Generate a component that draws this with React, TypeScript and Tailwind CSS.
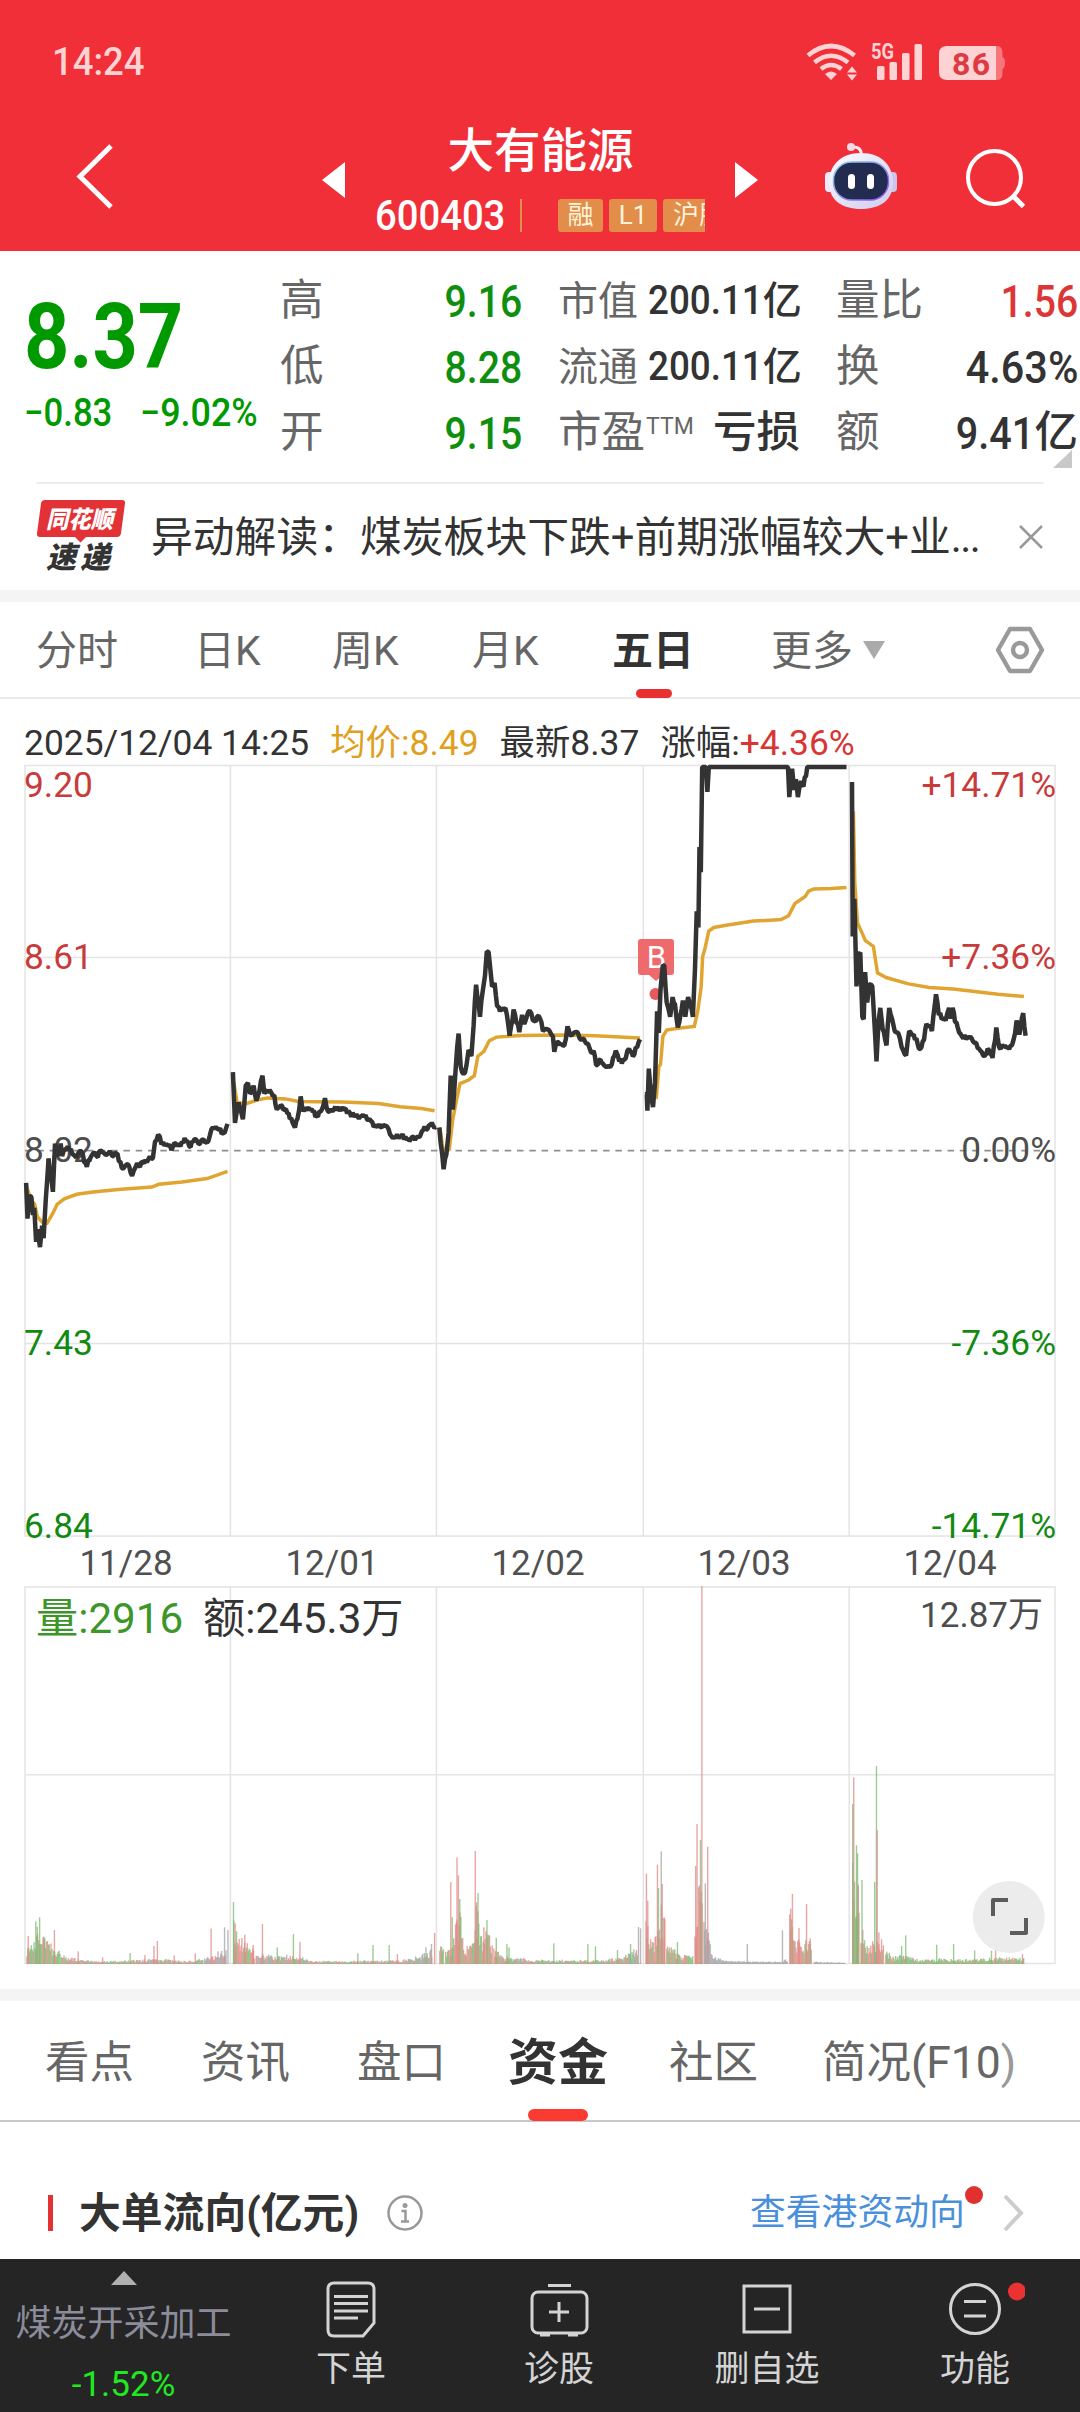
import { type ReactNode } from "react";
import clsx from "clsx";

type Point = [number, number];
type Series = { left: number; scale: number; price: Point[]; avg: Point[] };
type Tone = "r" | "g" | "n";

const TONES: Record<Tone, string> = {
  r: "#e08a86",
  g: "#7dba74",
  n: "#a3a3a6",
};

const GRID_X = [25, 230.4, 436.4, 643.3, 849.2, 1055];

// price and average traces, one entry per trading session
const SERIES: Series[] = [
  {
    left: 0,
    scale: 2.8,
    price: [[73, 1240], [77, 1340], [82, 1275], [88, 1280], [92, 1330], [96, 1310], [101, 1405], [105, 1370], [112, 1420], [118, 1360], [122, 1395], [128, 1290], [136, 1172], [148, 1265], [154, 1130], [160, 1165], [170, 1130], [174, 1165], [185, 1145], [195, 1150], [210, 1165], [225, 1150], [243, 1195], [260, 1158], [270, 1165], [285, 1152], [300, 1160], [325, 1158], [345, 1200], [355, 1188], [362, 1195], [370, 1220], [380, 1195], [400, 1182], [415, 1175], [428, 1170], [434, 1125], [443, 1105], [452, 1132], [465, 1130], [480, 1148], [492, 1130], [505, 1138], [517, 1115], [530, 1138], [548, 1118], [560, 1130], [570, 1118], [583, 1125], [592, 1090], [608, 1088], [625, 1100], [637, 1075]],
    avg: [[73, 1245], [85, 1285], [97, 1300], [105, 1335], [120, 1352], [132, 1353], [148, 1325], [160, 1300], [180, 1285], [215, 1272], [260, 1266], [340, 1258], [425, 1252], [445, 1244], [510, 1238], [580, 1228], [637, 1208]],
  },
  {
    left: 0,
    scale: 2.8,
    price: [[652, 930], [658, 1072], [668, 1015], [672, 1030], [680, 1062], [688, 968], [694, 960], [700, 990], [710, 968], [718, 1010], [726, 985], [735, 940], [740, 990], [755, 980], [768, 995], [775, 1035], [790, 1025], [808, 1045], [826, 1085], [833, 1060], [842, 998], [850, 1040], [865, 1030], [890, 1055], [905, 1025], [910, 1003], [918, 1040], [935, 1035], [960, 1035], [980, 1045], [1005, 1060], [1020, 1055], [1050, 1080], [1080, 1080], [1100, 1115], [1120, 1108], [1150, 1118], [1170, 1110], [1185, 1092], [1205, 1078], [1220, 1083]],
    avg: [[655, 960], [664, 1015], [690, 1018], [720, 1008], [750, 1002], [800, 1005], [835, 1012], [890, 1013], [960, 1014], [1060, 1018], [1120, 1027], [1180, 1032], [1217, 1038]],
  },
  {
    left: 0,
    scale: 2.8,
    price: [[1230, 1085], [1242, 1202], [1250, 1160], [1256, 1100], [1262, 940], [1268, 1035], [1276, 920], [1284, 822], [1290, 915], [1298, 935], [1306, 912], [1312, 868], [1320, 885], [1326, 800], [1333, 685], [1344, 775], [1352, 700], [1358, 660], [1363, 592], [1368, 594], [1378, 690], [1385, 680], [1392, 745], [1400, 760], [1415, 750], [1427, 828], [1438, 755], [1454, 818], [1462, 770], [1468, 795], [1483, 758], [1492, 785], [1512, 780], [1520, 815], [1535, 810], [1548, 830], [1552, 873], [1560, 845], [1580, 855], [1589, 802], [1600, 828], [1618, 820], [1628, 840], [1642, 850], [1655, 875], [1662, 870], [1669, 910], [1681, 895], [1700, 915], [1713, 908], [1724, 870], [1734, 900], [1748, 895], [1761, 865], [1772, 885], [1792, 838]],
    avg: [[1232, 1085], [1240, 1145], [1258, 1145], [1268, 1060], [1278, 1010], [1288, 962], [1312, 952], [1328, 940], [1338, 885], [1355, 872], [1370, 842], [1390, 832], [1460, 827], [1568, 826], [1666, 828], [1792, 834]],
  },
  {
    left: 540,
    scale: 2.9037,
    price: [[305, 992], [310, 992], [312, 1038], [316, 920], [322, 990], [328, 1028], [334, 960], [340, 760], [345, 820], [350, 700], [357, 630], [361, 632], [368, 735], [378, 775], [385, 720], [392, 740], [400, 805], [408, 770], [415, 730], [422, 775], [430, 720], [436, 745], [444, 775], [450, 640], [455, 480], [460, 525], [463, 300], [467, 370], [471, 76], [482, 76], [486, 145], [490, 76], [720, 76], [724, 160], [732, 80], [738, 140], [743, 110], [749, 160], [758, 115], [765, 130], [776, 76], [890, 76]],
    avg: [[305, 992], [312, 990], [338, 1000], [345, 915], [350, 908], [357, 830], [368, 812], [400, 807], [448, 802], [458, 760], [468, 690], [472, 608], [480, 580], [490, 535], [505, 525], [545, 518], [620, 507], [700, 503], [722, 492], [740, 458], [770, 438], [780, 423], [795, 417], [845, 416], [890, 413]],
  },
  {
    left: 540,
    scale: 2.9037,
    price: [[906, 118], [908, 550], [913, 445], [919, 690], [925, 600], [930, 595], [936, 775], [940, 782], [944, 650], [950, 735], [956, 685], [965, 690], [977, 900], [983, 790], [988, 750], [995, 810], [1006, 855], [1014, 750], [1022, 780], [1030, 815], [1040, 820], [1050, 860], [1063, 883], [1072, 815], [1085, 825], [1104, 865], [1115, 840], [1122, 795], [1138, 815], [1150, 712], [1158, 770], [1178, 785], [1188, 750], [1193, 780], [1198, 750], [1205, 790], [1225, 830], [1245, 835], [1258, 845], [1275, 865], [1290, 885], [1300, 865], [1314, 890], [1325, 805], [1333, 860], [1350, 855], [1362, 865], [1375, 840], [1384, 785], [1392, 825], [1403, 765], [1410, 828]],
    avg: [[910, 200], [914, 400], [922, 512], [935, 540], [945, 562], [968, 578], [980, 652], [1005, 665], [1070, 683], [1130, 693], [1200, 697], [1330, 712], [1405, 718]],
  },
];

// [x, height] outline of the ordinary per-minute volume
const VOLUME_BASE: { left: number; tones: string; outline: Point[] }[] = [
  { left: 0, tones: "ggr", outline: [[76, 40], [90, 50], [100, 80], [125, 70], [150, 50], [175, 30]] },
  { left: 0, tones: "rgn", outline: [[176, 28], [200, 18], [230, 12], [270, 8], [300, 8], [380, 10], [450, 14], [540, 8], [590, 15]] },
  { left: 0, tones: "nnr", outline: [[592, 15], [625, 30], [657, 40]] },
  { left: 0, tones: "rrg", outline: [[677, 110], [690, 80], [715, 60], [740, 30]] },
  { left: 0, tones: "rgn", outline: [[742, 30], [800, 22], [860, 25], [900, 8], [1000, 8], [1100, 10], [1180, 12], [1230, 30], [1255, 40]] },
  { left: 0, tones: "ggr", outline: [[1275, 50], [1290, 50]] },
  { left: 0, tones: "rrg", outline: [[1292, 35], [1308, 40], [1315, 90], [1325, 130], [1335, 130], [1345, 45], [1365, 50], [1372, 70], [1380, 180], [1390, 100], [1400, 70], [1415, 90], [1430, 40]] },
  { left: 0, tones: "rgn", outline: [[1432, 40], [1460, 20], [1568, 10]] },
  { left: 540, tones: "rgn", outline: [[0, 12], [170, 10], [240, 18], [285, 50]] },
  { left: 540, tones: "rrg", outline: [[306, 110], [318, 80], [330, 70], [340, 130], [350, 160], [360, 120], [364, 70]] },
  { left: 540, tones: "ggr", outline: [[366, 60], [400, 25], [444, 20]] },
  { left: 540, tones: "rrr", outline: [[448, 150], [460, 220], [472, 180]] },
  { left: 540, tones: "nnn", outline: [[474, 120], [490, 70], [500, 20], [540, 8], [700, 6], [720, 18]] },
  { left: 540, tones: "rrg", outline: [[723, 130], [735, 90], [760, 40], [775, 80], [790, 40]] },
  { left: 540, tones: "nnn", outline: [[794, 6], [886, 4]] },
  { left: 540, tones: "ggg", outline: [[906, 260], [920, 230], [928, 120]] },
  { left: 540, tones: "grr", outline: [[930, 110], [950, 60], [975, 70], [985, 80], [1000, 40]] },
  { left: 540, tones: "grg", outline: [[1002, 40], [1020, 20], [1060, 25], [1100, 12], [1150, 15], [1250, 12], [1330, 18], [1406, 15]] },
];

const VOLUME_SPIKES: { left: number; bars: [number, number, Tone][] }[] = [
  {
    left: 0,
    bars: [[82, 84, "r"], [104, 128, "g"], [108, 112, "g"], [115, 140, "g"], [128, 72, "r"], [158, 102, "r"], [227, 38, "r"], [298, 20, "r"], [378, 33, "g"], [421, 27, "r"], [447, 54, "r"], [457, 69, "r"], [506, 26, "r"], [567, 32, "r"], [613, 106, "r"], [652, 110, "n"], [662, 102, "n"], [678, 186, "g"], [683, 122, "r"], [711, 88, "r"], [735, 57, "r"], [762, 120, "r"], [805, 50, "g"], [852, 90, "g"], [871, 66, "r"], [1039, 32, "g"], [1083, 57, "g"], [1130, 57, "g"], [1154, 30, "r"], [1237, 50, "n"], [1253, 60, "n"], [1262, 93, "r"], [1309, 246, "r"], [1313, 140, "g"], [1327, 320, "r"], [1331, 266, "r"], [1335, 195, "g"], [1380, 339, "r"], [1384, 185, "r"], [1388, 213, "g"], [1405, 110, "r"], [1414, 132, "g"], [1441, 78, "g"], [1472, 60, "g"], [1478, 50, "g"]],
  },
  {
    left: 540,
    bars: [[40, 62, "g"], [139, 60, "g"], [161, 53, "g"], [225, 42, "g"], [263, 60, "g"], [286, 111, "n"], [292, 107, "n"], [309, 271, "r"], [313, 190, "r"], [341, 298, "r"], [344, 228, "g"], [352, 338, "n"], [355, 240, "r"], [361, 140, "r"], [399, 66, "g"], [452, 294, "r"], [456, 420, "r"], [466, 372, "g"], [470, 1134, "r"], [480, 242, "n"], [487, 352, "r"], [602, 60, "n"], [704, 101, "n"], [728, 166, "r"], [733, 210, "r"], [752, 108, "r"], [774, 180, "r"], [785, 77, "r"], [908, 480, "g"], [911, 560, "r"], [919, 356, "g"], [922, 332, "g"], [924, 238, "r"], [935, 252, "g"], [972, 246, "g"], [977, 594, "g"], [979, 402, "r"], [984, 95, "r"], [1050, 54, "g"], [1062, 86, "g"], [1152, 58, "g"], [1201, 60, "g"], [1262, 41, "g"], [1311, 40, "g"], [1323, 50, "r"], [1401, 30, "r"]],
  },
];

const noise = (n: number) => {
  const v = Math.sin(n * 12.9898) * 43758.5453;
  return v - Math.floor(v);
};

const toPath = (points: Point[], left: number, scale: number) =>
  points
    .map(([x, y], i) => `${i ? "L" : "M"}${(left + x / scale).toFixed(1)} ${(740 + y / 2.8).toFixed(1)}`)
    .join("");

// minute ticks between the main turning points
const withTicks = (points: Point[]) => {
  const out: Point[] = [];
  points.forEach(([x, y], i) => {
    out.push([x, y]);
    const next = points[i + 1];
    if (!next || (y < 80 && next[1] < 80)) return;
    const steps = Math.floor((next[0] - x) / 3.5);
    for (let s = 1; s < steps; s++) {
      const t = s / steps;
      out.push([x + (next[0] - x) * t, y + (next[1] - y) * t + (noise(x + s * 3.1) - 0.5) * 17]);
    }
  });
  return out;
};

const heightAt = (outline: Point[], x: number) => {
  const i = Math.max(1, outline.findIndex(([px]) => px >= x));
  const [x0, h0] = outline[i - 1];
  const [x1, h1] = outline[i];
  return h0 + ((h1 - h0) * (x - x0)) / (x1 - x0);
};

const Bar = ({ x, h, tone }: { x: number; h: number; tone: Tone }) => (
  <rect x={x} y={1964 - h} width={1.4} height={h} fill={TONES[tone]} opacity={0.75} />
);

// narrow figures used across the quote panel
const Num = ({ children, className }: { children: ReactNode; className?: string }) => (
  <span className={clsx("inline-block whitespace-nowrap", className)}>{children}</span>
);

const StatusBar = () => (
  <div className="flex h-[122px] items-center justify-between pl-[52px] pr-[74px] text-[#ffd2d4]">
    <Num className="mt-[2px] origin-left scale-x-[0.96] text-[38px] font-medium">14:24</Num>
    <svg width="200" height="44" viewBox="806 39 200 44" fill="#ffd2d4">
      <g fill="none" stroke="#ffd2d4" strokeWidth="4.6">
        <path d="M808 55.5Q831 36.5 854.5 55.5" />
        <path d="M814.5 62.5Q831 49 848 62.5" />
        <path d="M821 69Q831 61 841.5 69" />
      </g>
      <path d="M825 74Q831 69 837 74L831 80Z" />
      <path d="M847 72.5L852 66.500L857 72.500ZM847 74.500H857L852 80.500Z" />
      <text x="871" y="59" fontSize="22.5" fontWeight="700" textLength="23" lengthAdjust="spacingAndGlyphs">5G</text>
      <rect x="877" y="66" width="7.5" height="14" rx="1.5" />
      <rect x="889.5" y="62" width="7.5" height="18" rx="1.5" />
      <rect x="902" y="53" width="7.5" height="27" rx="1.5" />
      <rect x="914.5" y="44" width="7.5" height="36" rx="1.5" />
      <path d="M996 46H997Q1002 46 1002.5 52V57Q1005 58 1005 63Q1005 68 1002.5 69V74Q1002 80 997 80H996Z" fill="#f7767b" />
      <path d="M947 46H996V80H947Q939 80 939 72V54Q939 46 947 46Z" />
      <text x="952" y="74.5" fontSize="32" fontWeight="700" fill="#dd3a42" textLength="38">86</text>
    </svg>
  </div>
);

const Robot = () => (
  <svg width="76" height="72" viewBox="822 140 76 72">
    <defs>
      <linearGradient id="shell" x1="0" y1="0" x2="1" y2="1">
        <stop offset="0" stopColor="#fff" />
        <stop offset="1" stopColor="#cfc9ee" />
      </linearGradient>
      <linearGradient id="visor" x1="0" y1="0" x2="1" y2="1">
        <stop offset="0" stopColor="#8fd8ee" />
        <stop offset="1" stopColor="#8a4df0" />
      </linearGradient>
    </defs>
    <path d="M852 147Q861 146 861.5 155" fill="none" stroke="#f6e6f2" strokeWidth="3" />
    <circle cx="851" cy="147" r="4" fill="#f6dbe6" />
    <rect x="825" y="172" width="9" height="20" rx="4" fill="#ece9fa" />
    <rect x="888" y="172" width="9" height="20" rx="4" fill="#cbc5ea" />
    <path d="M861 153C882 153 893 166 893 183C893 200 880 209 861 209C842 209 829 200 829 183C829 166 840 153 861 153Z" fill="url(#shell)" />
    <rect x="833.5" y="162" width="55" height="38" rx="18" fill="#222c50" stroke="url(#visor)" strokeWidth="1.5" />
    <rect x="848" y="174" width="7" height="15" rx="3.5" fill="#fff" />
    <rect x="867" y="174" width="7" height="15" rx="3.5" fill="#fff" />
  </svg>
);

const Header = () => (
  <header className="h-[251px] bg-[#f12f38] text-white">
    <StatusBar />
    <div className="flex h-[129px] items-start">
      <svg className="ml-[72px] mt-[18px] shrink-0" width="44" height="72" viewBox="72 140 44 72" fill="none">
        <path d="M111 146L80 176.5L111 207" stroke="#fff" strokeWidth="5" />
      </svg>
      <svg className="ml-[206px] mt-[40px] shrink-0" width="23" height="36" viewBox="0 0 23 36">
        <path d="M23 0V36L0 18Z" fill="#fff" />
      </svg>
      <div className="ml-[30px] w-[331px] shrink-0">
        <div className="flex h-[68px] items-center justify-center pb-[9px] text-[46.5px] font-medium leading-none">
          大有能源
        </div>
        <div className="flex h-[50px] items-center overflow-hidden">
          <div className="w-[145px] shrink-0 pt-[2px]">
            <Num className="origin-left scale-x-[0.91] text-[42px] font-medium leading-none">600403</Num>
          </div>
          <div className="h-[33px] w-[2px] shrink-0 bg-[#e28d49]" />
          <div className="ml-[36px] flex h-[33px] w-[147px] shrink-0 gap-[6px] overflow-hidden text-[26px] leading-[33px] text-[#fff3dc]">
            <span className="w-[45px] shrink-0 rounded-[3px] bg-[#e28d49] text-center">融</span>
            <span className="w-[48px] shrink-0 rounded-[3px] bg-[#e28d49] text-center">L1</span>
            <span className="w-[76px] shrink-0 rounded-[3px] bg-[#e28d49] pl-[10px]">沪股</span>
          </div>
        </div>
      </div>
      <svg className="ml-[29px] mt-[40px] shrink-0" width="23" height="36" viewBox="0 0 23 36">
        <path d="M0 0V36L23 18Z" fill="#fff" />
      </svg>
      <div className="ml-[64px] mt-[18px] shrink-0">
        <Robot />
      </div>
      <svg className="ml-[62px] mt-[18px] shrink-0" width="70" height="76" viewBox="960 140 70 76" fill="none" stroke="#fff">
        <circle cx="994.5" cy="177.5" r="26.5" strokeWidth="4" />
        <path d="M1013 196L1023.5 206.5" strokeWidth="5" />
      </svg>
    </div>
  </header>
);

const Row = ({ label, children }: { label: ReactNode; children: ReactNode }) => (
  <div className="flex h-[66px] items-center justify-between whitespace-nowrap">
    <span className="text-[#666]">{label}</span>
    {children}
  </div>
);

const Quote = () => (
  <section className="relative flex h-[231px] pt-[17px] text-[43.5px] text-[#333]">
    <div className="w-[280px] shrink-0 pl-[24px] pt-[24px] leading-none text-[#009900]">
      <Num className="origin-left scale-x-[0.87] text-[91px] font-bold leading-none">8.37</Num>
      <div className="mt-[11px] flex h-[39px] text-[39px] font-medium">
        <div className="w-[116px]">
          <Num className="origin-left scale-x-[0.89]">−0.83</Num>
        </div>
        <Num className="origin-left scale-x-[0.92]">−9.02%</Num>
      </div>
    </div>
    <div className="w-[242px] shrink-0">
      {[["高", "9.16"], ["低", "8.28"], ["开", "9.15"]].map(([label, value]) => (
        <Row key={label} label={label}>
          <Num className="origin-right scale-x-[0.87] text-[45px] font-medium text-[#0f8f0f]">{value}</Num>
        </Row>
      ))}
    </div>
    <div className="ml-[36px] w-[242px] shrink-0">
      {["市值", "流通"].map((label) => (
        <Row key={label} label={<span className="text-[40px]">{label}</span>}>
          <span className="flex items-center">
            <Num className="origin-right scale-x-[0.92] text-[40px] font-medium">200.11</Num>
            <span className="text-[39px] font-medium">亿</span>
          </span>
        </Row>
      ))}
      <Row label={<>市盈<sup className="-top-[13px] ml-[1px] text-[23px] leading-none">TTM</sup></>}>
        <span className="font-medium">亏损</span>
      </Row>
    </div>
    <div className="ml-[36px] w-[242px] shrink-0">
      <Row label="量比">
        <Num className="origin-right scale-x-[0.87] text-[45px] font-medium text-[#dc3636]">1.56</Num>
      </Row>
      <Row label="换">
        <Num className="origin-right scale-x-[0.92] text-[45px] font-medium">4.63%</Num>
      </Row>
      <Row label="额">
        <span className="flex items-center">
          <Num className="origin-right scale-x-[0.88] text-[45px] font-medium">9.41</Num>
          <span className="font-medium">亿</span>
        </span>
      </Row>
    </div>
    <svg className="absolute bottom-[14px] right-2" width="19" height="18" viewBox="0 0 19 18">
      <path d="M19 0V18H0Z" fill="#c8c8c8" />
    </svg>
  </section>
);

const News = () => (
  <section className="mx-9 flex h-[108px] items-center border-t-2 border-[#ededed]">
    <svg className="shrink-0" width="92" height="76" viewBox="36 499 92 76">
      <path d="M45 500H122Q125.5 500 125 503.5L121 533Q120.5 537 117 537H86L80.5 542.5L75 537H40Q36.5 537 37 533.5L41 503.5Q41.5 500 45 500Z" fill="#e33236" />
      <g fontStyle="italic" fontWeight="900">
        <text x="46" y="527.5" fontSize="24" fill="#fff" textLength="67" lengthAdjust="spacingAndGlyphs">同花顺</text>
        <text x="46" y="568" fontSize="30" fill="#333" textLength="64">速递</text>
      </g>
    </svg>
    <p className="ml-[23px] mt-[2px] w-[846px] shrink-0 whitespace-nowrap text-[41.8px] leading-none text-[#333]">
      异动解读：煤炭板块下跌+前期涨幅较大+业<span className="tracking-[-1.5px]">...</span>
    </p>
    <svg className="ml-[21px] shrink-0" width="26" height="26" viewBox="0 0 26 26" stroke="#999" strokeWidth="2.5">
      <path d="M2 2L24 24M24 2L2 24" />
    </svg>
  </section>
);

const PeriodTabs = () => (
  <nav className="relative flex h-[97px] items-center border-b-2 border-[#ebebeb] text-[41px] text-[#666]">
    <span className="ml-[36px] mt-[3px] w-[158px]">分时</span>
    <span className="mt-[3px] w-[138px]">日K</span>
    <span className="mt-[3px] w-[140px]">周K</span>
    <span className="mt-[3px] w-[140px]">月K</span>
    <span className="mt-[3px] w-[159px] font-bold text-[#333]">五日</span>
    <span className="mt-[3px]">更多</span>
    <svg className="ml-[10px]" width="22" height="18" viewBox="0 0 22 18">
      <path d="M0 0H22L11 18Z" fill="#aaa" />
    </svg>
    <svg className="ml-[110px]" width="50" height="48" viewBox="0 0 50 48" fill="none" stroke="#999" strokeWidth="4.4">
      <path d="M15 3H35L47 24L35 45H15L3 24Z" strokeLinejoin="round" />
      <circle cx="25" cy="24" r="7" />
    </svg>
    <div className="absolute -bottom-[1px] left-[636px] h-[9px] w-[36px] rounded-full bg-[#e93030]" />
  </nav>
);

const AXIS = [
  { y: 797, price: "9.20", pct: "+14.71%", fill: "#c93a3a" },
  { y: 968.5, price: "8.61", pct: "+7.36%", fill: "#c93a3a" },
  { y: 1161.5, price: "8.02", pct: "0.00%", fill: "#4d4d4d" },
  { y: 1354.5, price: "7.43", pct: "-7.36%", fill: "#128a12" },
  { y: 1537.5, price: "6.84", pct: "-14.71%", fill: "#128a12" },
];

const PriceChart = () => (
  <svg className="block" width="1080" height="782" viewBox="0 760 1080 782">
    <g stroke="#e4e4e4" strokeWidth="1.5" fill="none">
      <rect x="25" y="765.5" width="1030" height="770.5" />
      <path d="M25 957.5H1055M25 1343.5H1055" />
      {GRID_X.slice(1, 5).map((x) => (
        <path key={x} d={`M${x} 765V1536`} />
      ))}
    </g>
    <path d="M25 1150.7H1055" stroke="#8f8f8f" strokeWidth="1.8" strokeDasharray="6.5 5.8" />
    <g fontSize="35.3">
      {AXIS.map((a) => (
        <g key={a.y} fill={a.fill}>
          <text x="24" y={a.y}>{a.price}</text>
          <text x="1056" y={a.y} textAnchor="end">{a.pct}</text>
        </g>
      ))}
    </g>
    <g fill="none" strokeWidth="3.5" stroke="#e0a530">
      {SERIES.map((s, i) => (
        <path key={i} d={toPath(s.avg, s.left, s.scale)} />
      ))}
    </g>
    <circle cx="655.5" cy="994" r="6" fill="#e65a5e" />
    <path d="M641 939H671Q674 939 674 942V972Q674 975 671 975H663L656 981L649 975H641Q638 975 638 972V942Q638 939 641 939Z" fill="#ee6a6d" />
    <text x="656.5" y="967.5" fontSize="31" fill="#fff" textAnchor="middle">B</text>
    <g fill="none" strokeWidth="4.5" stroke="#333" strokeLinejoin="bevel">
      {SERIES.map((s, i) => (
        <path key={i} d={toPath(withTicks(s.price), s.left, s.scale)} />
      ))}
    </g>
  </svg>
);

const VolumeChart = () => (
  <svg className="block" width="1080" height="384" viewBox="0 1584 1080 384">
    <g stroke="#e4e4e4" strokeWidth="1.5" fill="none">
      <rect x="25" y="1587" width="1030" height="376.5" />
      <path d="M25 1774.7H1055" />
      {GRID_X.slice(1, 5).map((x) => (
        <path key={x} d={`M${x} 1587V1964`} />
      ))}
    </g>
    {VOLUME_BASE.map((seg, i) => {
      const first = seg.outline[0][0];
      const last = seg.outline[seg.outline.length - 1][0];
      const count = Math.floor((last - first) / 2.6);
      return Array.from({ length: count }, (_, k) => {
        const x = first + k * 2.6;
        const h = heightAt(seg.outline, x) * (0.45 + noise(x + i) * 0.75);
        const tone = seg.tones[Math.floor(noise(x * 1.7 + 3) * 3)] as Tone;
        return <Bar key={`${i}-${k}`} x={seg.left + x / 2.9037} h={h / 3} tone={tone} />;
      });
    })}
    {VOLUME_SPIKES.map((seg) =>
      seg.bars.map(([x, h, tone]) => <Bar key={`${seg.left}-${x}`} x={seg.left + x / 2.9037 - 0.7} h={h / 3} tone={tone} />)
    )}
    <text x="36" y="1632.5" fontSize="42.2" fill="#3c9629">量:2916</text>
    <text x="203" y="1632.5" fontSize="42.2" fill="#333">额:245.3万</text>
    <text x="1043" y="1627" fontSize="35" fill="#4d4d4d" textAnchor="end">12.87万</text>
    <circle cx="1008.7" cy="1917" r="36" fill="#ececec" />
    <path d="M993 1916V1900H1008M1026 1918V1933H1010" fill="none" stroke="#5c5c5c" strokeWidth="4" strokeLinejoin="round" />
  </svg>
);

const ChartPanel = () => (
  <section>
    <div className="flex h-[61px] items-center gap-[21px] whitespace-nowrap pl-[24px] pt-[29px] text-[35.4px] leading-none text-[#333]">
      <span>2025/12/04 14:25</span>
      <span className="text-[#dfa01e]">均价:8.49</span>
      <span>最新8.37</span>
      <span>
        涨幅:<span className="text-[#d93535]">+4.36%</span>
      </span>
    </div>
    <PriceChart />
    <div className="ml-[23px] mr-[27px] grid h-[42px] grid-cols-5 items-center text-center text-[35px] leading-none text-[#505050]">
      {["11/28", "12/01", "12/02", "12/03", "12/04"].map((d) => (
        <span key={d}>{d}</span>
      ))}
    </div>
    <VolumeChart />
  </section>
);

const DetailTabs = () => (
  <nav className="relative flex h-[121px] items-center whitespace-nowrap border-b-2 border-[#c8c8c8] pt-[5px] text-[44.5px] text-[#666]">
    <span className="ml-[45px] w-[156px] shrink-0">看点</span>
    <span className="w-[156px] shrink-0">资讯</span>
    <span className="w-[151px] shrink-0">盘口</span>
    <span className="w-[161px] shrink-0 text-[50px] font-bold text-[#333]">资金</span>
    <span className="w-[153px] shrink-0">社区</span>
    <span>
      简况(F10<span className="text-[#999]">)</span>
    </span>
    <div className="absolute -bottom-[1px] left-[528px] h-[12px] w-[60px] rounded-full bg-[#fb3b31]" />
  </nav>
);

const FundHeading = () => (
  <section className="flex h-[137px] items-center pt-[45px] leading-none">
    <div className="ml-[48px] h-[36px] w-[5px] bg-[#e23232]" />
    <h2 className="ml-[26px] mt-[2px] w-[308px] whitespace-nowrap text-[41.8px] font-bold text-[#333]">大单流向(亿元)</h2>
    <svg width="36" height="36" viewBox="0 0 36 36" fill="none" stroke="#999" strokeWidth="2.5">
      <circle cx="18" cy="18" r="16.5" />
      <circle cx="18" cy="10.5" r="2.5" fill="#999" stroke="none" />
      <path d="M14.5 16H18.5V26M14 26.5H22" />
    </svg>
    <div className="relative ml-[327px] mt-[2px] w-[215px] whitespace-nowrap text-[35.8px] text-[#4a8fdb]">
      查看港资动向
      <span className="absolute -right-[18px] -top-[10px] h-[18px] w-[18px] rounded-full bg-[#e03030]" />
    </div>
    <svg className="ml-[36px]" width="24" height="38" viewBox="0 0 24 38" fill="none" stroke="#ccc" strokeWidth="4">
      <path d="M4 2L20 19L4 36" />
    </svg>
  </section>
);

const NavItem = ({ label, children }: { label: string; children: ReactNode }) => (
  <div className="flex w-[208px] shrink-0 flex-col items-center">
    <svg className="mt-[17px]" width="100" height="66" viewBox="-50 -33 100 66" fill="none" stroke="#d4d4d4" strokeWidth="3">
      {children}
    </svg>
    <span className="mt-[10px] text-[35px] leading-none text-[#d4d4d4]">{label}</span>
  </div>
);

const BottomNav = () => (
  <footer className="flex h-[153px] bg-[#252525]">
    <div className="flex w-[247px] shrink-0 flex-col items-center pt-[12px] leading-none">
      <svg width="26" height="14" viewBox="0 0 26 14">
        <path d="M13 0L26 14H0Z" fill="#b0b0b0" />
      </svg>
      <span className="mt-[21px] text-[36px] text-[#8c8c9a]">煤炭开采加工</span>
      <span className="mt-[25px] text-[35px] text-[#22e822]">-1.52%</span>
    </div>
    <NavItem label="下单">
      <path d="M-17 -26H17Q23 -26 23 -20V14L12 27H-17Q-23 27 -23 21V-20Q-23 -26 -17 -26Z" />
      <path d="M-17 -12.5H17M-17 -5.5H17M-17 2H17M-17 9H7" />
    </NavItem>
    <NavItem label="诊股">
      <rect x="-27" y="-17" width="55" height="41" rx="6" />
      <path d="M-11 -23.5H12M0 -7V13M-10 3H10" />
      <path d="M-19 25.5H-9M9 25.5H19" strokeWidth="4" />
    </NavItem>
    <NavItem label="删自选">
      <rect x="-23" y="-23" width="46" height="46" />
      <path d="M-13 0H13" />
    </NavItem>
    <NavItem label="功能">
      <circle cx="0" cy="0" r="24.5" />
      <path d="M-11 -7.5H11M-11 7H11" />
      <circle cx="42" cy="-17.5" r="9" fill="#ea3232" stroke="none" />
    </NavItem>
  </footer>
);

export default function App() {
  return (
    <div className="w-[1080px] overflow-hidden bg-white font-['Roboto','Noto_Sans_CJK_SC',sans-serif] leading-none">
      <Header />
      <Quote />
      <News />
      <div className="h-[12px] bg-[#f4f4f4]" />
      <PeriodTabs />
      <ChartPanel />
      <div className="mt-[21px] h-[12px] bg-[#f4f4f4]" />
      <DetailTabs />
      <FundHeading />
      <BottomNav />
    </div>
  );
}
